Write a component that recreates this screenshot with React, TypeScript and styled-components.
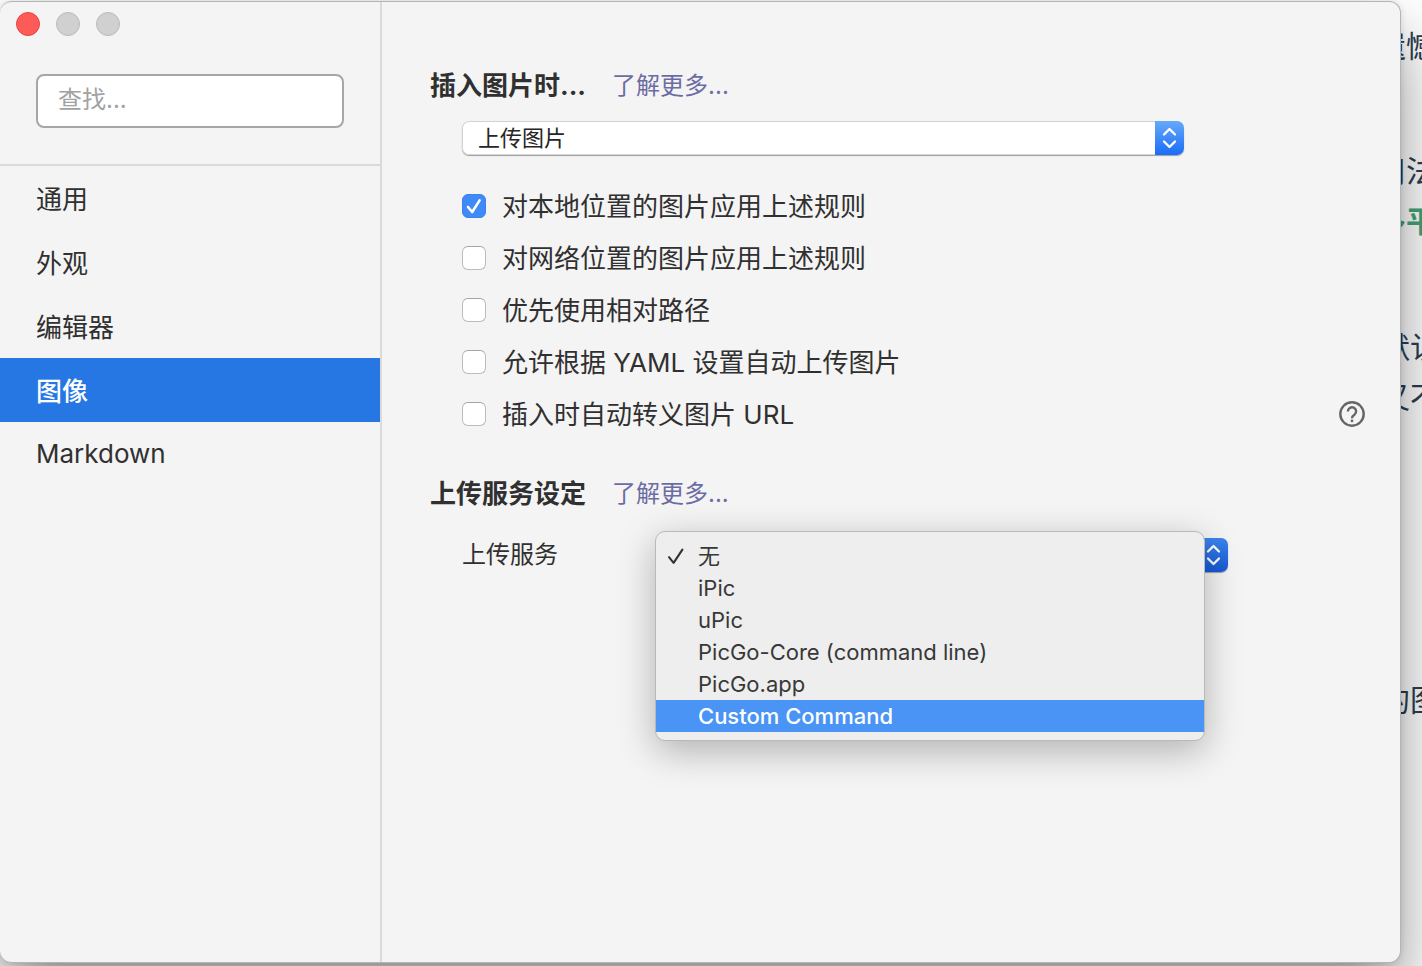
import React, { useState } from "react";
import styled, { createGlobalStyle } from "styled-components";

const GlobalStyle = createGlobalStyle`
  * { box-sizing: border-box; }
  body {
    margin: 0;
    background: #ffffff;
    color: #303030;
    font-family: Inter, "Noto Sans CJK SC", sans-serif;
    font-size: 26px;
  }
  button, input, select { font-family: inherit; color: inherit; }
`;

const Desktop = styled.div`
  display: grid;
  grid-template: minmax(100vh, auto) / minmax(0, 1fr);
  overflow: hidden;
`;

/* The editor document that lies behind the preferences window */
const DocumentPage = styled.article`
  grid-area: 1 / 1;
  justify-self: end;
  width: 46px;
  padding-top: 21px;
  overflow: hidden;
  white-space: nowrap;
  font-size: 30px;
  line-height: 50px;
  color: #2c3e50;
`;

const Paragraph = styled.p<{ $before?: number; $inset?: boolean }>`
  margin: ${(p) => p.$before ?? 0}px 0 0;
  padding-left: ${(p) => (p.$inset ? 4 : 0)}px;
`;

const Emphasis = styled.strong`
  color: #42a57a;
`;

const Window = styled.main`
  grid-area: 1 / 1;
  z-index: 1;
  display: flex;
  margin: 1px 21px 3px 0;
  background: #f4f4f4;
  border: 1px solid #b4b4b4;
  border-left: 0;
  border-radius: 12px;
  overflow: hidden;
  box-shadow: 0 36px 64px rgba(0, 0, 0, 0.42), 0 0 6px rgba(0, 0, 0, 0.12);
`;

const Sidebar = styled.aside`
  flex: 0 0 382px;
  border-right: 2px solid #dadada;
`;

const SidebarHead = styled.div`
  display: flex;
  flex-direction: column;
  gap: 38px;
  padding: 10px 36px 36px;
  border-bottom: 2px solid #dadada;
`;

const WindowControls = styled.div`
  display: flex;
  gap: 16px;
  margin-left: -20px;
`;

const WindowControl = styled.button<{ $active?: boolean }>`
  width: 24px;
  height: 24px;
  padding: 0;
  border-radius: 50%;
  border: 1px solid ${(p) => (p.$active ? "#e2463f" : "#b9b9b9")};
  background: ${(p) => (p.$active ? "#fc5b57" : "#d0d0d0")};
`;

const SearchInput = styled.input`
  width: 100%;
  height: 54px;
  padding: 0 20px 4px;
  border: 2px solid #a6a6a6;
  border-radius: 8px;
  background: #ffffff;
  font-size: 24px;
  outline: none;
  &::placeholder { color: #a2a2a2; opacity: 1; }
`;

const NavItem = styled.button<{ $selected: boolean }>`
  display: block;
  width: 100%;
  height: 64px;
  padding: 0 36px 2px;
  border: 0;
  text-align: left;
  font-size: 26px;
  font-weight: ${(p) => (p.$selected ? 500 : 400)};
  color: ${(p) => (p.$selected ? "#ffffff" : "#303030")};
  background: ${(p) => (p.$selected ? "#2677e4" : "transparent")};
`;

const Content = styled.div`
  flex: 1;
  min-width: 0;
  padding: 63px 35px 63px 48px;
`;

const Section = styled.section`
  & + & { margin-top: 33px; }
`;

const SectionHead = styled.header<{ $gap: number }>`
  display: flex;
  align-items: center;
  gap: 26px;
  height: 40px;
  padding-bottom: 4px;
  margin-bottom: ${(p) => p.$gap}px;
`;

const Title = styled.h2`
  margin: 0;
  font-size: 26px;
  font-weight: 700;
`;

const MoreLink = styled.a`
  font-size: 24px;
  color: #6c6ca4;
  text-decoration: none;
`;

const SectionBody = styled.div`
  padding-left: 32px;
`;

const SelectBox = styled.div<{ $width: number }>`
  position: relative;
  display: flex;
  flex: 1;
  max-width: ${(p) => p.$width}px;
  height: 34px;
  border-radius: 7px;
  background: #ffffff;
  box-shadow: inset 0 0 0 1px #d2d2d2, 0 1px 1px rgba(0, 0, 0, 0.35);
`;

const NativeSelect = styled.select`
  flex: 1;
  min-width: 0;
  padding: 0 16px;
  border: 0;
  background: transparent;
  appearance: none;
  font-size: 22px;
  color: #262626;
  outline: none;
`;

const Stepper = styled.span<{ $pressed?: boolean }>`
  display: grid;
  place-items: center;
  width: 29px;
  height: 34px;
  border-radius: 0 7px 7px 0;
  background: ${(p) =>
    p.$pressed
      ? "linear-gradient(#3c84ee, #1459d6)"
      : "linear-gradient(#66a9fa, #1a6df8)"};
`;

const CheckList = styled.div`
  margin-top: 25px;
`;

const CheckRow = styled.div`
  display: flex;
  align-items: center;
  justify-content: space-between;
  height: 52px;
`;

const CheckLabel = styled.label`
  display: flex;
  align-items: center;
  gap: 16px;
`;

const CheckText = styled.span`
  padding-bottom: 3px;
`;

const CheckControl = styled.span`
  display: grid;
  width: 24px;
  height: 24px;
  & > * { grid-area: 1 / 1; }
`;

const Checkbox = styled.input`
  appearance: none;
  width: 24px;
  height: 24px;
  margin: 0;
  border: 1px solid #bcbcbc;
  border-top-color: #a4a4a4;
  border-radius: 6px;
  background: #ffffff;
  &:checked {
    border-color: #3a82f2;
    background: #3f8af7;
  }
`;

const HelpButton = styled.button`
  display: flex;
  padding: 0;
  border: 0;
  background: none;
`;

const Field = styled.div`
  display: flex;
  align-items: center;
  height: 34px;
`;

const FieldLabel = styled.label`
  flex: 0 0 194px;
  padding-bottom: 6px;
  font-size: 24px;
`;

const Menu = styled.ul`
  position: absolute;
  top: -7px;
  left: -1px;
  right: 23px;
  margin: 0;
  padding: 8px 0;
  list-style: none;
  border: 1px solid #b9b9b9;
  border-radius: 10px;
  background: #eeeeee;
  box-shadow: 0 10px 36px rgba(0, 0, 0, 0.28);
`;

const MenuItem = styled.li<{ $highlighted: boolean }>`
  display: grid;
  grid-template-columns: 42px 1fr;
  align-items: center;
  height: 32px;
  font-size: 22px;
  line-height: 32px;
  font-weight: ${(p) => (p.$highlighted ? 500 : 400)};
  color: ${(p) => (p.$highlighted ? "#ffffff" : "#383838")};
  background: ${(p) => (p.$highlighted ? "#4a94f5" : "transparent")};
`;

const MenuMark = styled.span`
  display: flex;
  padding-left: 11px;
`;

const Chevrons = () => (
  <svg width="15" height="22" viewBox="0 0 15 22" fill="none" stroke="#fff" strokeWidth="2.3" strokeLinecap="round" strokeLinejoin="round" aria-hidden="true">
    <path d="M2 7.5 7.5 2 13 7.5M2 14.5 7.5 20 13 14.5" />
  </svg>
);

const navItems = ["通用", "外观", "编辑器", "图像", "Markdown"];
const rules = [
  "对本地位置的图片应用上述规则",
  "对网络位置的图片应用上述规则",
  "优先使用相对路径",
  "允许根据 YAML 设置自动上传图片",
  "插入时自动转义图片 URL",
];
const services = ["无", "iPic", "uPic", "PicGo-Core (command line)", "PicGo.app", "Custom Command"];

export default function App() {
  const [section, setSection] = useState("图像");
  const [checked, setChecked] = useState([true, false, false, false, false]);
  const [service, setService] = useState("无");
  const [highlighted, setHighlighted] = useState("Custom Command");

  return (
    <Desktop>
      <GlobalStyle />
      <DocumentPage>
        <Paragraph>遗憾</Paragraph>
        <Paragraph $before={75}>用法</Paragraph>
        <Paragraph><Emphasis>多平</Emphasis></Paragraph>
        <Paragraph $before={76} $inset>默认</Paragraph>
        <Paragraph $inset>又不</Paragraph>
        <Paragraph $before={253} $inset>的图</Paragraph>
      </DocumentPage>
      <Window>
        <Sidebar>
          <SidebarHead>
            <WindowControls>
              <WindowControl $active aria-label="关闭" />
              <WindowControl aria-label="最小化" />
              <WindowControl aria-label="缩放" />
            </WindowControls>
            <SearchInput type="search" placeholder="查找..." aria-label="查找" />
          </SidebarHead>
          <nav>
            {navItems.map((name) => (
              <NavItem key={name} $selected={name === section} onClick={() => setSection(name)}>
                {name}
              </NavItem>
            ))}
          </nav>
        </Sidebar>
        <Content>
          <Section>
            <SectionHead $gap={16}>
              <Title>插入图片时...</Title>
              <MoreLink href="#insert">了解更多...</MoreLink>
            </SectionHead>
            <SectionBody>
              <SelectBox $width={722}>
                <NativeSelect aria-label="插入图片时" defaultValue="上传图片">
                  <option>上传图片</option>
                </NativeSelect>
                <Stepper><Chevrons /></Stepper>
              </SelectBox>
              <CheckList>
                {rules.map((rule, i) => (
                  <CheckRow key={rule}>
                    <CheckLabel>
                      <CheckControl>
                        <Checkbox
                          type="checkbox"
                          checked={checked[i]}
                          onChange={() => setChecked(checked.map((c, n) => (n === i ? !c : c)))}
                        />
                        {checked[i] && (
                          <svg width="24" height="24" viewBox="0 0 24 24" fill="none" stroke="#fff" strokeWidth="2.6" strokeLinecap="round" strokeLinejoin="round" aria-hidden="true">
                            <path d="M6 13 10.2 18 17.6 6.4" />
                          </svg>
                        )}
                      </CheckControl>
                      <CheckText>{rule}</CheckText>
                    </CheckLabel>
                    {i === rules.length - 1 && (
                      <HelpButton aria-label="帮助">
                        <svg width="26" height="26" viewBox="0 0 26 26" fill="none" stroke="#666" strokeWidth="2.4" aria-hidden="true">
                          <circle cx="13" cy="13" r="11.7" />
                          <path d="M8.9 10.4a4.1 4.1 0 1 1 6.6 3.2c-1.6 1.2-2.5 1.8-2.5 3.6" />
                          <path d="M13 18.6v2.5" />
                        </svg>
                      </HelpButton>
                    )}
                  </CheckRow>
                ))}
              </CheckList>
            </SectionBody>
          </Section>
          <Section>
            <SectionHead $gap={25}>
              <Title>上传服务设定</Title>
              <MoreLink href="#upload">了解更多...</MoreLink>
            </SectionHead>
            <SectionBody>
              <Field>
                <FieldLabel htmlFor="service">上传服务</FieldLabel>
                <SelectBox $width={572}>
                  <NativeSelect id="service" value={service} onChange={(e) => setService(e.target.value)}>
                    {services.map((name) => <option key={name}>{name}</option>)}
                  </NativeSelect>
                  <Stepper $pressed><Chevrons /></Stepper>
                  <Menu role="listbox" aria-label="上传服务">
                    {services.map((name) => (
                      <MenuItem
                        key={name}
                        role="option"
                        aria-selected={name === service}
                        $highlighted={name === highlighted}
                        onMouseEnter={() => setHighlighted(name)}
                        onClick={() => setService(name)}
                      >
                        <MenuMark>
                          {name === service && (
                            <svg width="18" height="18" viewBox="0 0 18 18" fill="none" stroke="#333" strokeWidth="2.1" strokeLinecap="round" strokeLinejoin="round" aria-hidden="true">
                              <path d="M2 10.2 6.6 15.8 15.4 2.6" />
                            </svg>
                          )}
                        </MenuMark>
                        {name}
                      </MenuItem>
                    ))}
                  </Menu>
                </SelectBox>
              </Field>
            </SectionBody>
          </Section>
        </Content>
      </Window>
    </Desktop>
  );
}
